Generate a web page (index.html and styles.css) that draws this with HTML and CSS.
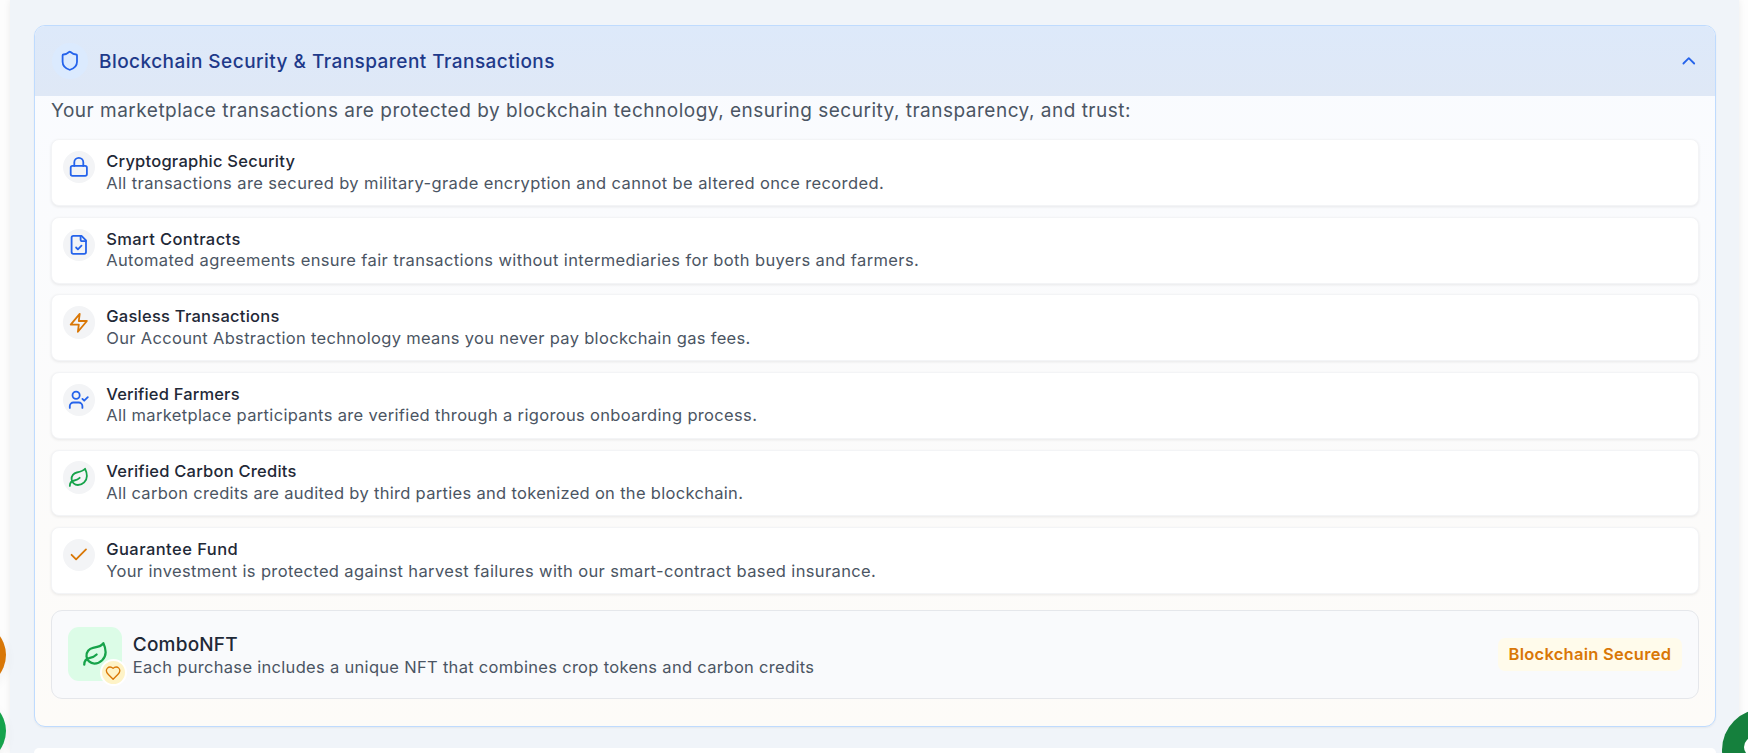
FILE: index.html
```html
<!DOCTYPE html>
<html lang="en">
<head>
<meta charset="utf-8">
<title>Blockchain Security</title>
<link rel="stylesheet" href="styles.css">
</head>
<body>
<main class="page">
  <section class="panel">
    <header class="panel-header">
      <span class="shield-chip"><svg class="icon blue" viewBox="0 0 24 24"><path d="M20 13c0 5-3.5 7.5-7.66 8.95a1 1 0 0 1-.67-.01C7.5 20.5 4 18 4 13V6a1 1 0 0 1 1-1c2 0 4.500-1.200 6.240-2.720a1.170 1.170 0 0 1 1.520 0C14.510 3.810 17 5 19 5a1 1 0 0 1 1 1z"/></svg></span>
      <h2 class="panel-title">Blockchain Security &amp; Transparent Transactions</h2>
      <svg class="icon blue" viewBox="0 0 24 24"><path d="m18 15-6-6-6 6"/></svg>
    </header>
    <div class="panel-body">
      <p class="intro">Your marketplace transactions are protected by blockchain technology, ensuring security, transparency, and trust:</p>
      <div class="features">
        <article class="feature crypto">
          <span class="chip"><svg class="icon blue" viewBox="0 0 24 24"><rect x="3" y="11" width="18" height="11" rx="2"/><path d="M7 11V7a5 5 0 0 1 10 0v4"/></svg></span>
          <div><h3>Cryptographic Security</h3><p>All transactions are secured by military-grade encryption and cannot be altered once recorded.</p></div>
        </article>
        <article class="feature contracts">
          <span class="chip"><svg class="icon blue" viewBox="0 0 24 24"><path d="M15 2H6a2 2 0 0 0-2 2v16a2 2 0 0 0 2 2h12a2 2 0 0 0 2-2V7Z"/><path d="M14 2v4a2 2 0 0 0 2 2h4"/><path d="m9 15 2 2 4-4"/></svg></span>
          <div><h3>Smart Contracts</h3><p>Automated agreements ensure fair transactions without intermediaries for both buyers and farmers.</p></div>
        </article>
        <article class="feature gasless">
          <span class="chip"><svg class="icon amber" viewBox="0 0 24 24"><path d="M13 2 3 14h9l-1 8 10-12h-9l1-8z"/></svg></span>
          <div><h3>Gasless Transactions</h3><p>Our Account Abstraction technology means you never pay blockchain gas fees.</p></div>
        </article>
        <article class="feature farmers">
          <span class="chip"><svg class="icon blue" viewBox="0 0 24 24"><path d="M16 21v-2a4 4 0 0 0-4-4H6a4 4 0 0 0-4 4v2"/><circle cx="9" cy="7" r="4"/><path d="m16 11 2 2 4-4"/></svg></span>
          <div><h3>Verified Farmers</h3><p>All marketplace participants are verified through a rigorous onboarding process.</p></div>
        </article>
        <article class="feature carbon">
          <span class="chip"><svg class="icon green" viewBox="0 0 24 24"><path d="M11 20A7 7 0 0 1 9.800 6.100C15.500 5 17 4.480 19 2c1 2 2 4.180 2 8 0 5.500-4.780 10-10 10Z"/><path d="M2 21c0-3 1.850-5.360 5.080-6C9.500 14.520 12 13 13 12"/></svg></span>
          <div><h3>Verified Carbon Credits</h3><p>All carbon credits are audited by third parties and tokenized on the blockchain.</p></div>
        </article>
        <article class="feature fund">
          <span class="chip"><svg class="icon amber" viewBox="0 0 24 24"><path d="M20 6 9 17l-5-5"/></svg></span>
          <div><h3>Guarantee Fund</h3><p>Your investment is protected against harvest failures with our smart-contract based insurance.</p></div>
        </article>
      </div>
      <div class="combo">
        <div class="combo-tile">
          <svg class="icon leaf green" viewBox="0 0 24 24"><path d="M11 20A7 7 0 0 1 9.800 6.100C15.500 5 17 4.480 19 2c1 2 2 4.180 2 8 0 5.500-4.780 10-10 10Z"/><path d="M2 21c0-3 1.850-5.360 5.080-6C9.500 14.520 12 13 13 12"/></svg>
          <span class="heart-badge"><svg class="icon heart amber" viewBox="0 0 24 24"><path d="M19 14c1.490-1.460 3-3.210 3-5.500A5.500 5.500 0 0 0 16.500 3c-1.760 0-3 .5-4.500 2-1.500-1.500-2.740-2-4.500-2A5.500 5.500 0 0 0 2 8.500c0 2.300 1.500 4.050 3 5.500l7 7Z"/></svg></span>
        </div>
        <div class="combo-text"><h3>ComboNFT</h3><p>Each purchase includes a unique NFT that combines crop tokens and carbon credits</p></div>
        <span class="secured">Blockchain Secured</span>
      </div>
    </div>
  </section>
  <section class="next-panel"></section>
</main>
<div class="floating">
  <div class="bubble orange"></div>
  <div class="bubble leafgreen"></div>
  <div class="bubble chat"><span class="chat-dot"></span></div>
</div>
</body>
</html>
```
FILE: styles.css
```css
* { box-sizing: border-box; margin: 0; padding: 0; }
body {
  height: 753px;
  overflow: hidden;
  position: relative;
  background: #fdfdfd;
  font-family: Inter, "Open Sans", sans-serif;
  font-size: 16.5px;
  line-height: 21.6px;
  color: #4b5563;
}
.page {
  height: 753px;
  margin: 0 9px 0 10px;
  padding: 25px 23px 0 24px;
  overflow: hidden;
  background: #f0f4f9;
  box-shadow: 0 0 7px rgba(0, 0, 0, 0.07);
}
.icon {
  display: block;
  width: 21.6px;
  height: 21.6px;
  flex: none;
  fill: none;
  stroke: currentColor;
  stroke-width: 2;
  stroke-linecap: round;
  stroke-linejoin: round;
}
.blue { color: #2563eb; }
.amber { color: #d97706; }
.green { color: #16a34a; }

.panel {
  height: 702px;
  border: 1px solid #bfdbfe;
  border-radius: 11px;
  overflow: hidden;
  background: linear-gradient(#f9fbff, #fdfbf8);
  box-shadow: 0 1px 2px rgba(0, 0, 0, 0.05);
}
.panel-header {
  display: flex;
  align-items: center;
  gap: 11.5px;
  height: 70px;
  padding: 0 15.5px 0 16.5px;
  background: linear-gradient(#dde9fa, #dfe8f6);
}
.shield-chip {
  display: grid;
  place-items: center;
  width: 36px;
  height: 36px;
  border-radius: 50%;
  background: #dbeafe;
}
.panel-title {
  flex: 1;
  padding-top: 2px;
  font-size: 19px;
  font-weight: 500;
  letter-spacing: 0.455px;
  color: #1e3a8a;
}
.panel-body { padding: 0 16px; }
.intro {
  margin-bottom: 15.3px;
  padding-top: 1px;
  font-size: 19px;
  line-height: 27px;
  letter-spacing: 0.498px;
}
.features { display: grid; gap: 10.8px; }
.feature {
  display: flex;
  gap: 10.8px;
  height: 66.8px;
  padding: 10.8px 11px;
  border: 1px solid #f3f4f6;
  border-radius: 8px;
  background: #fff;
  box-shadow: 0 1px 3px rgba(0, 0, 0, 0.08);
}
.chip {
  display: grid;
  place-items: center;
  width: 32.4px;
  height: 32.4px;
  border-radius: 50%;
  background: #f3f4f6;
}
.feature h3 { font-size: 16.5px; font-weight: 500; color: #1f2937; }
.crypto h3 { letter-spacing: 0.227px; }
.crypto p { letter-spacing: 0.389px; }
.contracts h3 { letter-spacing: 0.4px; }
.contracts p { letter-spacing: 0.376px; }
.gasless h3 { letter-spacing: 0.25px; }
.gasless p { letter-spacing: 0.324px; }
.farmers h3 { letter-spacing: 0.16px; }
.farmers p { letter-spacing: 0.339px; }
.carbon h3 { letter-spacing: 0.23px; }
.carbon p { letter-spacing: 0.308px; }
.fund h3 { letter-spacing: 0.45px; }
.fund p { letter-spacing: 0.362px; }

.combo {
  display: flex;
  align-items: center;
  gap: 10.8px;
  height: 89px;
  margin-top: 15.8px;
  padding: 0 16px;
  border: 1px solid #e5e7eb;
  border-radius: 11px;
  background: #f9fafc;
}
.combo-tile {
  display: grid;
  place-items: center;
  position: relative;
  width: 54px;
  height: 54px;
  border-radius: 11px;
  background: #dcfce7;
}
.leaf { width: 27px; height: 27px; }
.heart-badge {
  display: grid;
  place-items: center;
  position: absolute;
  right: -5px;
  bottom: -5px;
  width: 27px;
  height: 27px;
  border: 2px solid #fff;
  border-radius: 50%;
  background: #fef3c7;
}
.heart { width: 16.2px; height: 16.2px; }
.combo-text { flex: 1; padding-top: 1px; letter-spacing: 0.302px; }
.combo-text h3 {
  font-size: 19px;
  font-weight: 500;
  line-height: 25px;
  letter-spacing: 0.2px;
  color: #1f2937;
}
.secured {
  padding: 6px 10.8px;
  border-radius: 7px;
  background: #fffbeb;
  color: #d97706;
  font-weight: 600;
  letter-spacing: 0.25px;
}
.next-panel {
  height: 5px;
  margin-top: 21px;
  border-radius: 11px 11px 0 0;
  background: #fff;
}

/* Floating action buttons cut off by the window edges */
.floating {
  position: absolute;
  inset: 0;
  overflow: hidden;
  pointer-events: none;
}
.bubble { position: absolute; border-radius: 50%; }
.orange {
  left: -58px;
  top: 623px;
  width: 64px;
  height: 64px;
  background: #d97706;
  box-shadow: 0 4px 12px rgba(0, 0, 0, 0.06);
}
.leafgreen {
  left: -58px;
  top: 699px;
  width: 64px;
  height: 64px;
  background: #16a34a;
  box-shadow: 0 4px 12px rgba(0, 0, 0, 0.06);
}
.chat {
  left: 1722px;
  top: 709px;
  width: 82px;
  height: 82px;
  background: #15803d;
}
.chat-dot {
  position: absolute;
  left: 22px;
  top: 28px;
  width: 20px;
  height: 20px;
  border-radius: 50%;
  background: #fff;
}
```
